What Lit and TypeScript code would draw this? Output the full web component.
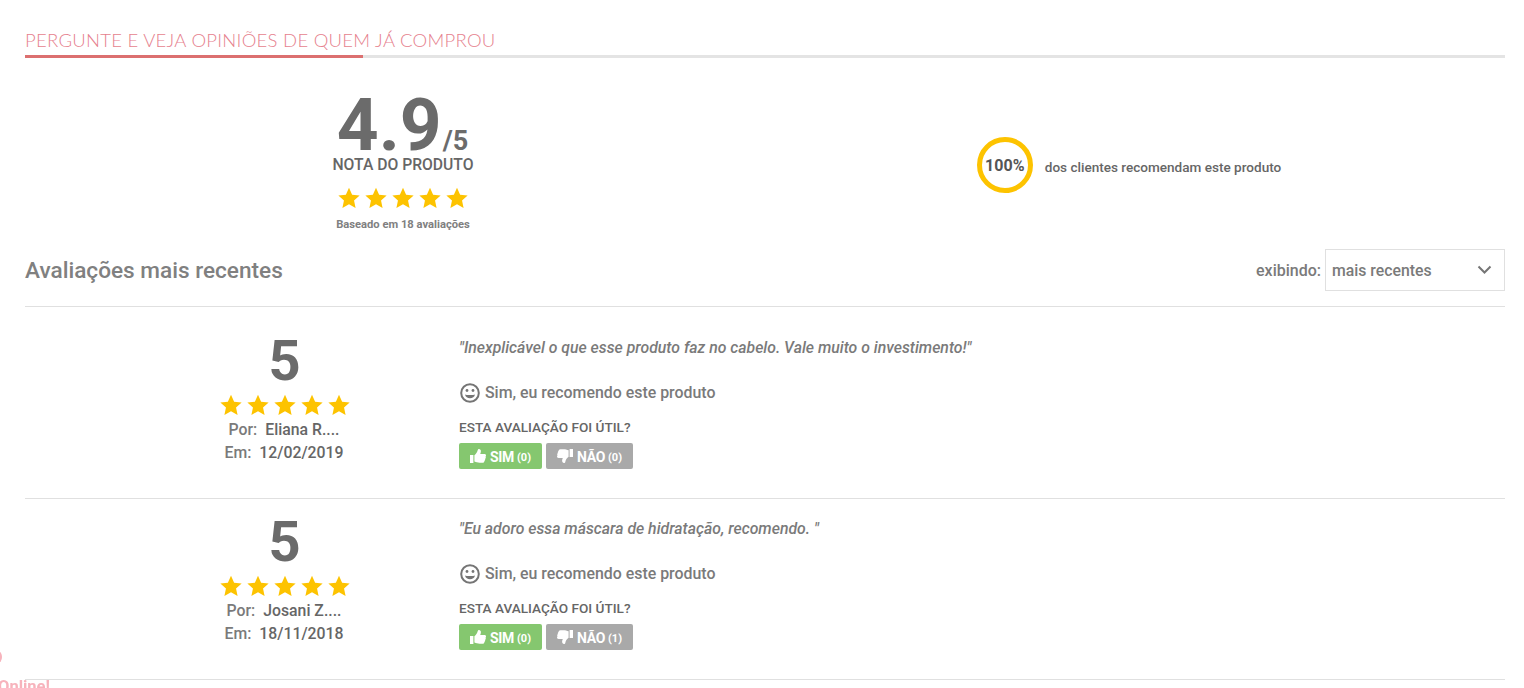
import { LitElement, html, css, svg } from "lit";
import { customElement } from "lit/decorators.js";

const star = svg`<path d="M12 .8l3.4 7.6 8.2.9-6.1 5.5 1.7 8.1L12 18.8l-7.2 4.1 1.7-8.1L.4 9.3l8.2-.9z"/>`;
const stars = html`${[0, 1, 2, 3, 4].map(
  () => html`<svg class="star" viewBox="0 0 24 24" fill="#fdc300">${star}</svg>`
)}`;
const up = html`<svg class="th" viewBox="0 0 16 14" fill="#fff"><path d="M0 6h3.4v8H0zM4.4 6.2C6 5 7.2 3.4 7.6 1.6 7.8.6 8.2 0 9 0c1.200 0 1.900 1 1.900 2.200 0 1-.4 2-.7 2.800h4.300c.9 0 1.500.6 1.500 1.400 0 .5-.2.900-.5 1.200.2.300.3.600.3 1 0 .6-.3 1-.7 1.300.1.200.1.500.1.700 0 .6-.3 1.100-.8 1.300 0 1.100-.7 1.800-1.800 1.800H9.500c-1.800 0-3.300-.6-5.100-1.100z"/></svg>`;
const down = html`<svg class="th" viewBox="0 0 16 14" fill="#fff"><path d="M12.600 8h3.400V0h-3.400zM11.600 7.800C10 9 8.800 10.600 8.400 12.400c-.2 1-.6 1.600-1.400 1.600-1.200 0-1.900-1-1.900-2.200 0-1 .4-2 .7-2.800H1.500C.6 9 0 8.400 0 7.600c0-.5.2-.9.500-1.200-.2-.3-.3-.6-.3-1 0-.6.3-1 .7-1.300-.1-.2-.1-.5-.1-.7 0-.6.3-1.100.8-1.300C1.600.9 2.300.2 3.400.2h3.100c1.800 0 3.300.6 5.100 1.100z"/></svg>`;
const smile = html`<svg class="smile" viewBox="0 0 20 20" fill="none" stroke="#757575"><circle cx="10" cy="10" r="8.800" stroke-width="2"/><circle cx="7" cy="7.500" r="1.400" fill="#757575" stroke="none"/><circle cx="13" cy="7.500" r="1.400" fill="#757575" stroke="none"/><path d="M5 11.500c1.500.7 8.500.7 10 0-.6 2.500-2.500 3.800-5 3.800s-4.400-1.300-5-3.800z" fill="#757575" stroke="none"/></svg>`;

type Review = { quote: string; by: string; date: string; no: number };
const reviews: Review[] = [
  { quote: '"Inexplicável o que esse produto faz no cabelo. Vale muito o investimento!"', by: "Eliana R....", date: "12/02/2019", no: 0 },
  { quote: '"Eu adoro essa máscara de hidratação, recomendo. "', by: "Josani Z....", date: "18/11/2018", no: 1 },
];

@customElement("app-root")
export class AppRoot extends LitElement {
  static styles = css`
    :host { display: block; height: 688px; overflow: hidden; position: relative; background: #fff; font-family: Roboto, "Liberation Sans", sans-serif; color: #7a7a7a; }
    .page { padding: 29px 19px 0 25px; }
    .title { font-family: Lato, sans-serif; font-weight: 300; font-size: 18.500px; letter-spacing: .27px; line-height: 22px; color: #e67f8e; height: 23px; white-space: nowrap; }
    .rule { margin-top: 3px; height: 3px; background: #e4e4e4; }
    .rule div { width: 338px; height: 3px; background: #dc7070; }
    .summary { display: grid; grid-template-columns: 726px 726px; padding-left: 15px; height: 191px; }
    .score { display: flex; flex-direction: column; align-items: center; }
    .big { margin-top: 29px; height: 70px; line-height: 76px; font-size: 73px; font-weight: 700; color: #6b6b6b; white-space: nowrap; margin-right: 1px; }
    .big span { font-size: 27px; line-height: 26px; margin-left: 1px; }
    .nota { font-size: 15.700px; font-weight: 500; line-height: 20px; color: #666; margin-top: -2px; }
    .summary .stars { margin-top: 12px; }
    .stars { display: flex; gap: 5px; justify-content: center; }
    .star { width: 22px; height: 22px; display: block; }
    .base { margin-top: 9px; font-size: 11.200px; line-height: 14px; font-weight: 700; color: #808080; }
    .rec { display: flex; align-items: center; justify-content: center; gap: 12px; height: 56px; margin-top: 79px; }
    .ring { width: 56px; height: 56px; box-sizing: border-box; border: 5px solid #fdc300; border-radius: 50%; display: flex; align-items: center; justify-content: center; font-size: 16px; font-weight: 700; color: #555; }
    .rec p { margin: 4px 0 0; font-size: 13.550px; font-weight: 500; color: #666; }
    .head { display: flex; justify-content: space-between; height: 42px; padding-bottom: 15px; align-items: flex-start; border-bottom: 1px solid #e0e0e0; }
    .head h2 { margin: 9px 0 0; font-size: 22.600px; line-height: 26px; font-weight: 500; color: #808080; }
    .sort { display: flex; align-items: center; gap: 4px; font-size: 16px; font-weight: 500; }
    .select { width: 180px; height: 42px; box-sizing: border-box; border: 1px solid #e0e0e0; display: flex; align-items: center; justify-content: space-between; padding: 0 12px 0 6px; font-size: 15.800px; }
    .select svg { width: 15px; height: 10px; }
    .review { display: flex; border-bottom: 1px solid #e0e0e0; padding-top: 20px; height: 160px; }
    .review.first { padding-top: 31px; height: 160px; }
    .who { width: 348px; margin-left: 86px; margin-top: -2px; display: flex; flex-direction: column; align-items: center; font-size: 15.800px; font-weight: 500; }
    .five { font-size: 56px; font-weight: 700; line-height: 50px; color: #6b6b6b; margin-right: 1px; }
    .who .stars { margin-top: 8px; gap: 5px; }
    .line { display: flex; gap: 8px; line-height: 23px; white-space: nowrap; margin-right: 2px; }
    .stars + .line { margin-top: 2px; }
    .line b { font-weight: 500; color: #666; }
    .body { flex: 1; }
    .quote { font-size: 15.800px; font-weight: 500; font-style: italic; line-height: 20px; color: #7a7a7a; margin: 0; }
    .yes { display: flex; align-items: center; gap: 5px; margin-top: 25px; font-size: 15.900px; font-weight: 500; line-height: 20px; margin-left: 1px; }
    .smile { width: 20px; height: 20px; }
    .useful { margin-top: 15px; font-size: 13.600px; font-weight: 500; line-height: 18px; color: #666; }
    .btns { display: flex; gap: 4px; margin-top: 7px; }
    .btn { height: 26px; border-radius: 2px; display: flex; align-items: center; justify-content: center; color: #fff; font-size: 14px; font-weight: 700; gap: 4px; letter-spacing: -.3px; }
    .btn span, .btn small { padding-top: 2px; }
    .btn small { font-size: 11px; font-weight: 700; margin-left: -1px; letter-spacing: 0; }
    .btn.ok { width: 83px; background: #85c76f; }
    .btn.no { width: 87px; background: #a9a9a9; }
    .th { width: 16px; height: 14px; }
    .chat { position: absolute; left: 0; top: 0; width: 60px; height: 688px; pointer-events: none; color: #f7b3bc; filter: blur(.6px); }
    .dot { position: absolute; left: -6px; top: 651px; width: 8px; height: 12px; border-radius: 50%; background: #f7b3bc; }
    .on { position: absolute; left: -2px; top: 677px; font-size: 16.500px; font-weight: 700; white-space: nowrap; }
  `;

  render() {
    return html`
      <div class="page">
        <div class="title">PERGUNTE E VEJA OPINIÕES DE QUEM JÁ COMPROU</div>
        <div class="rule"><div></div></div>
        <section class="summary">
          <div class="score">
            <div class="big">4.9<span>/5</span></div>
            <div class="nota">NOTA DO PRODUTO</div>
            <div class="stars">${stars}</div>
            <div class="base">Baseado em 18 avaliações</div>
          </div>
          <div class="rec">
            <div class="ring">100%</div>
            <p>dos clientes recomendam este produto</p>
          </div>
        </section>
        <div class="head">
          <h2>Avaliações mais recentes</h2>
          <div class="sort">exibindo:
            <div class="select">mais recentes
              <svg viewBox="0 0 15 10" fill="none" stroke="#757575" stroke-width="2"><path d="M1.500 1.500L7.500 7.500 13.500 1.500"/></svg>
            </div>
          </div>
        </div>
        ${reviews.map(
          (r, i) => html`
            <article class="review ${i === 0 ? "first" : ""}">
              <div class="who">
                <div class="five">5</div>
                <div class="stars">${stars}</div>
                <div class="line"><span>Por:</span><b>${r.by}</b></div>
                <div class="line"><span>Em:</span><b>${r.date}</b></div>
              </div>
              <div class="body">
                <p class="quote">${r.quote}</p>
                <div class="yes">${smile}Sim, eu recomendo este produto</div>
                <div class="useful">ESTA AVALIAÇÃO FOI ÚTIL?</div>
                <div class="btns">
                  <div class="btn ok">${up}<span>SIM</span><small>(0)</small></div>
                  <div class="btn no">${down}<span>NÃO</span><small>(${r.no})</small></div>
                </div>
              </div>
            </article>
          `
        )}
      </div>
      <div class="chat"><div class="dot"></div><div class="on">Online!</div></div>
    `;
  }
}
